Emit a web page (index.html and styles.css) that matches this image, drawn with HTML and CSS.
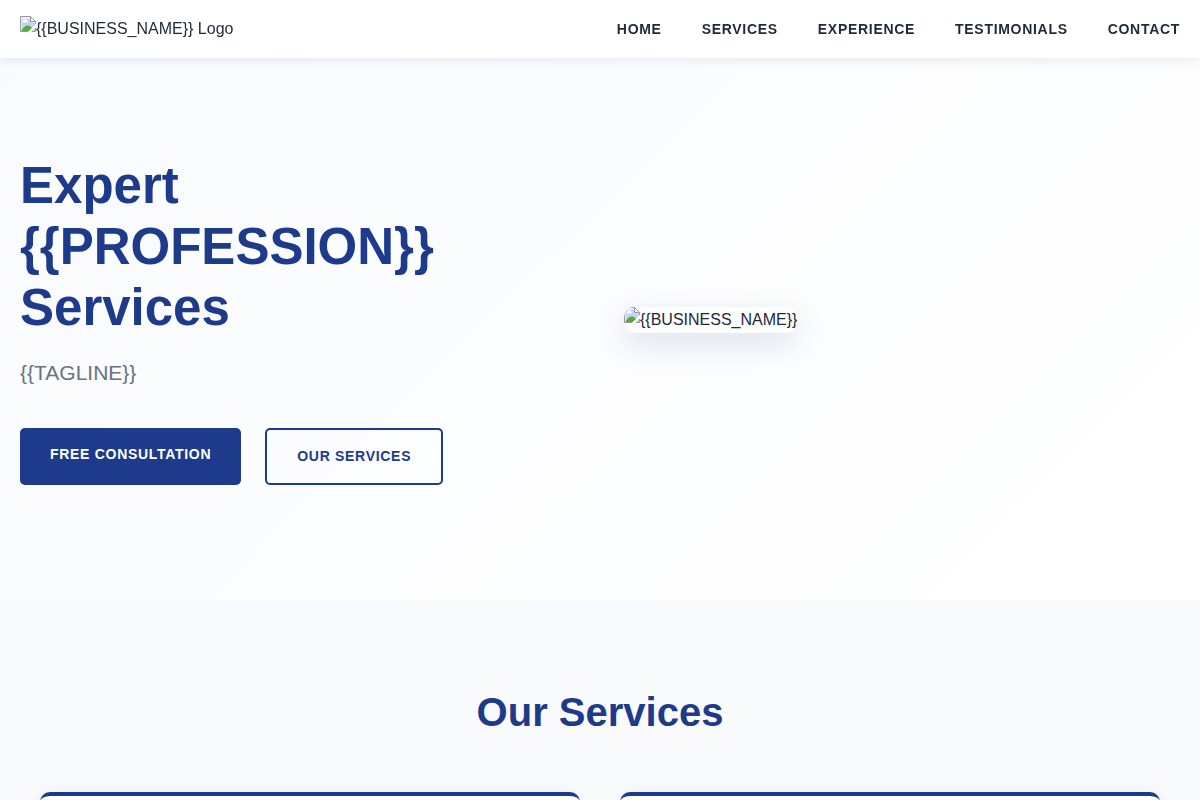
FILE: index.html
```html
<!DOCTYPE html>
<html lang="en">
<head>
  <meta charset="utf-8">
  <meta name="viewport" content="width=device-width, initial-scale=1">
  <title>{{BUSINESS_NAME}}</title>
  <link rel="stylesheet" href="styles.css">
</head>
<body>
  <svg class="symbols" aria-hidden="true">
    <symbol id="picture" viewBox="0 0 16 16">
      <path d="M1 1H11V5H15V9L9 15H1Z" fill="#c3d3f5"/>
      <path d="M1 1H11V5H15V7H13V3H2V14H1Z" fill="#e6edfb"/>
      <path d="M3 6.500a1.500 1.500 0 0 1 1-2.500a1.800 1.800 0 0 1 3.300.500a1.200 1.200 0 0 1 .200 2Z" fill="#fff"/>
      <path d="M1.500 15C2.500 12 5 9.500 8 9.500C10 9.500 11 10.500 12 12L9 15Z" fill="#55ab34"/>
      <path d="M8 16L16 8V11L11 16Z" fill="#fff"/>
      <path d="M12 15L15 12V15Z" fill="#b9dcae"/>
      <path d="M10.500.500V5.500H15.500Z" fill="#fff" stroke="#999"/>
      <path d="M15.500 8V5.500L10.500.500H.500V15.500H8" fill="none" stroke="#999"/>
      <path d="M12 15.500H15.500V12" fill="none" stroke="#999"/>
    </symbol>
  </svg>

  <header class="header">
    <div class="header-inner">
      <div class="logo">
        <svg class="picture-icon" aria-hidden="true"><use href="#picture"/></svg>
        <span>{{BUSINESS_NAME}} Logo</span>
      </div>
      <nav class="nav" aria-label="Main">
        <a href="#home">Home</a>
        <a href="#services">Services</a>
        <a href="#experience">Experience</a>
        <a href="#testimonials">Testimonials</a>
        <a href="#contact">Contact</a>
      </nav>
    </div>
  </header>

  <main>
    <section class="hero" id="home">
      <div class="hero-inner">
        <div class="hero-text">
          <h1>Expert {{PROFESSION}} Services</h1>
          <p class="tagline">{{TAGLINE}}</p>
          <div class="actions">
            <a class="button button-primary" href="#contact">Free Consultation</a>
            <a class="button button-outline" href="#services">Our Services</a>
          </div>
        </div>
        <div class="hero-media">
          <div class="hero-picture">
            <svg class="picture-icon" aria-hidden="true"><use href="#picture"/></svg>
            <span>{{BUSINESS_NAME}}</span>
          </div>
        </div>
      </div>
    </section>

    <section class="services" id="services">
      <h2>Our Services</h2>
      <div class="cards">
        <article class="card"></article>
        <article class="card"></article>
      </div>
    </section>
  </main>
</body>
</html>
```

FILE: styles.css
```css
:root {
  --navy: #1e3a8a;
  --ink: #1f2937;
  --muted: #6b7280;
  --pale: #f8fafc;
}

* {
  box-sizing: border-box;
}

body {
  margin: 0;
  font-family: "Liberation Sans", Arial, sans-serif;
  font-size: 16px;
  line-height: 26px;
  color: var(--ink);
  background: #fff;
}

h1,
h2,
p {
  margin: 0;
}

a {
  color: inherit;
  text-decoration: none;
}

.symbols {
  display: none;
}

.picture-icon {
  flex: none;
  width: 16px;
  height: 16px;
}

.header {
  position: fixed;
  top: 0;
  left: 0;
  right: 0;
  z-index: 10;
  background: #fff;
  box-shadow: 0 2px 10px rgba(30, 58, 138, 0.1);
}

.header-inner {
  display: flex;
  align-items: center;
  justify-content: space-between;
  max-width: 1200px;
  margin: 0 auto;
  padding: 16px 20px;
}

.logo {
  display: flex;
}

.nav {
  display: flex;
  gap: 40px;
}

.nav a,
.button {
  font-size: 14px;
  font-weight: 700;
  letter-spacing: 0.05em;
  text-transform: uppercase;
}

.hero {
  display: flex;
  align-items: center;
  min-height: 600px;
  padding: 120px 0 80px;
  background: linear-gradient(135deg, var(--pale) 0%, #fff 100%);
}

.hero-inner {
  display: grid;
  grid-template-columns: 1fr 1fr;
  gap: 48px;
  align-items: center;
  width: 100%;
  max-width: 1200px;
  margin: 0 auto;
  padding: 0 20px;
}

h1 {
  margin-bottom: 18px;
  font-size: 51px;
  line-height: 61px;
  color: var(--navy);
}

.tagline {
  margin-bottom: 38px;
  font-size: 21px;
  line-height: 34px;
  color: var(--muted);
}

.actions {
  display: flex;
  gap: 24px;
}

.button {
  padding: 15px 30px;
  border-radius: 5px;
  line-height: 23px;
}

.button-primary {
  color: #fff;
  background: var(--navy);
}

.button-outline {
  border: 2px solid var(--navy);
  color: var(--navy);
}

.hero-media {
  display: flex;
}

.hero-picture {
  display: flex;
  overflow: hidden;
  border-radius: 10px;
  box-shadow: 0 10px 30px rgba(30, 58, 138, 0.15);
}

.services {
  padding: 80px 40px;
  background: var(--pale);
}

h2 {
  margin-bottom: 48px;
  font-size: 40px;
  line-height: 64px;
  text-align: center;
  color: var(--navy);
}

.cards {
  display: grid;
  grid-template-columns: 1fr 1fr;
  gap: 40px;
  max-width: 1120px;
  margin: 0 auto;
}

.card {
  min-height: 240px;
  border-top: 4px solid var(--navy);
  border-radius: 10px;
  background: #fff;
  box-shadow: 0 5px 20px rgba(30, 58, 138, 0.08);
}

@media (max-width: 800px) {
  .header-inner,
  .nav,
  .actions {
    flex-wrap: wrap;
  }

  .hero-inner,
  .cards {
    grid-template-columns: 1fr;
  }
}
```
